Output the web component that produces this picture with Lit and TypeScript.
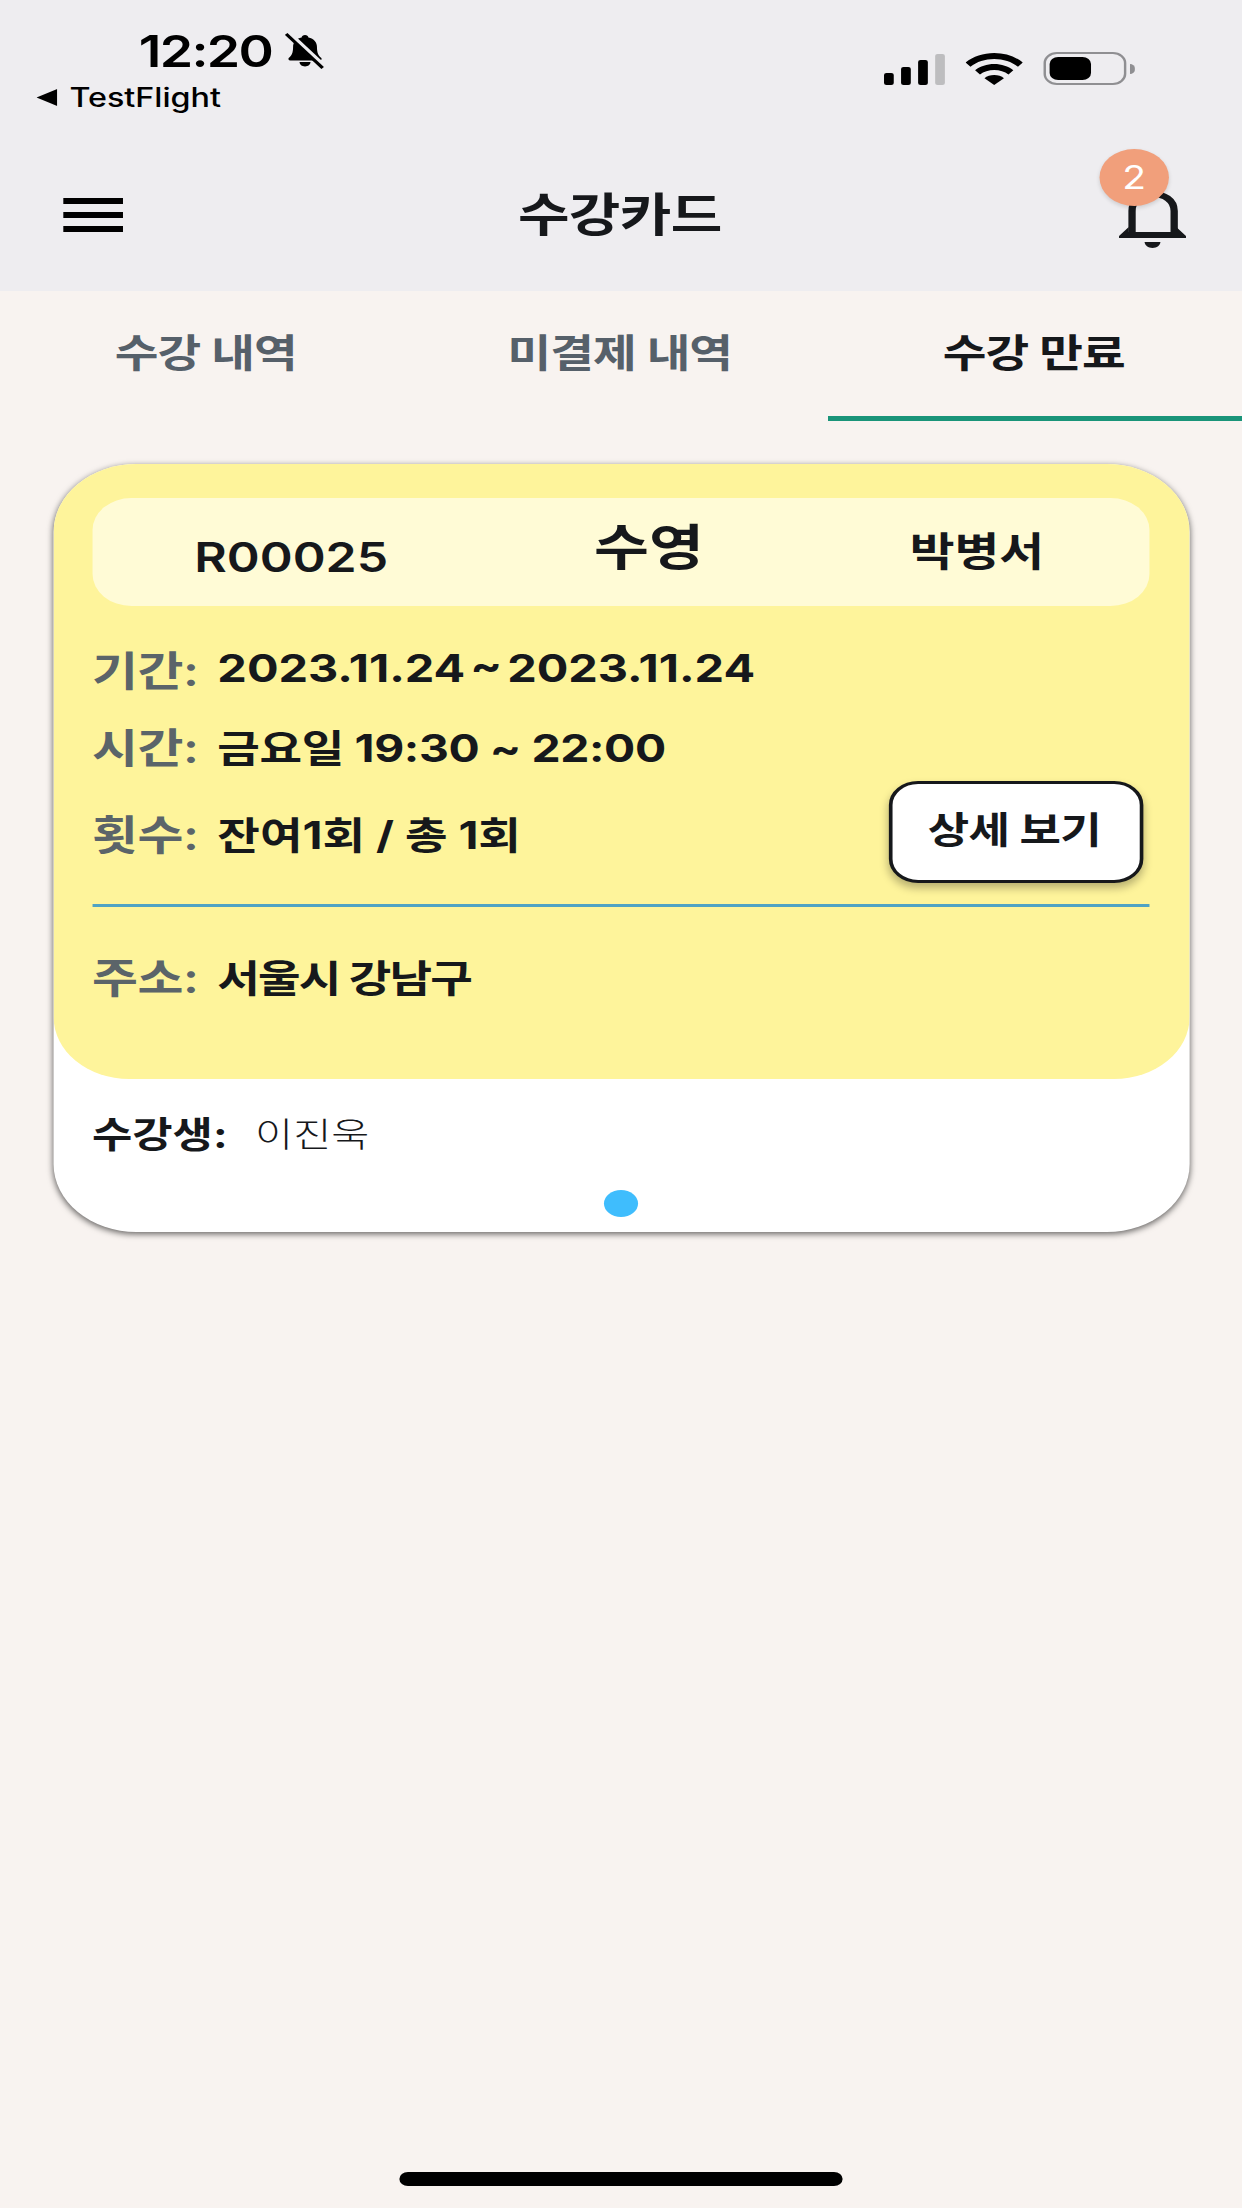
import { LitElement, css, html } from 'lit'
import { customElement } from 'lit/decorators.js'

@customElement('app-root')
export class AppRoot extends LitElement {
  render() {
    return html`
      <div class="screen">
        <header class="top">
          <div class="status">
            <div class="status-left">
              <div class="clock">
                <span>12:20</span>
                <svg class="muted" viewBox="0 0 33 36">
                  <path d="M16.5 2c1.6 0 2.6 1 2.8 2.4 4.6 1.1 7 4.8 7 9.4 0 6.2 1.2 9 3.4 11 .9.9.4 2.7-1.2 2.7H4.5c-1.6 0-2.1-1.8-1.2-2.700 2.200-2 3.400-4.800 3.400-11 0-4.600 2.400-8.300 7-9.400.2-1.400 1.200-2.400 2.800-2.400zM12 29h9c0 2.600-2 4.400-4.500 4.400S12 31.600 12 29z" fill="#000"/>
                  <path d="M2.500 0l29 33" stroke="#eeedf0" stroke-width="5"/>
                  <path d="M1 1l30 34" stroke="#000" stroke-width="2.800"/>
                </svg>
              </div>
              <div class="back">
                <svg viewBox="0 0 17 17"><path d="M0 8.500 17 0v17z" fill="#000"/></svg>
                <span>TestFlight</span>
              </div>
            </div>
            <div class="status-right">
              <div class="signal">
                <i style="height:12px"></i>
                <i style="height:18px"></i>
                <i style="height:25px"></i>
                <i class="off" style="height:31px"></i>
              </div>
              <svg class="wifi" viewBox="0 0 47 32">
                <path d="M23.500 0C32.500 0 40.700 3.500 47 9.400l-4 4.300C37.800 8.800 31 6 23.500 6S9.200 8.800 4 13.700L0 9.400C6.300 3.500 14.500 0 23.500 0z" fill="#000"/>
                <path d="M23.500 11c6 0 11.500 2.300 15.700 6.200l-4 4.300c-3.100-2.800-7.200-4.500-11.700-4.500s-8.600 1.700-11.700 4.500l-4-4.300C12 13.300 17.500 11 23.500 11z" fill="#000"/>
                <path d="M23.500 22c3.100 0 6 1.200 8 3.200L23.500 32l-8-6.800c2-2 4.900-3.200 8-3.200z" fill="#000"/>
              </svg>
              <div class="battery">
                <div class="cell"><div class="level"></div></div>
                <div class="nub"></div>
              </div>
            </div>
          </div>
          <nav class="nav">
            <div class="menu"><i></i><i></i><i></i></div>
            <h1>수강카드</h1>
            <div class="alarm">
              <svg viewBox="0 0 55 60">
                <path d="M10.700 44V22C10.700 11 18 5 27.500 5S45.300 11 45.300 22v22" fill="none" stroke="#16181b" stroke-width="6"/>
                <path d="M8 38 0 47v2h55v-2l-8-9v5H8z" fill="#16181b"/>
                <path d="M21 53h13c0 3-3 6-6.500 6S21 56 21 53z" fill="#16181b"/>
              </svg>
              <div class="badge">2</div>
            </div>
          </nav>
        </header>

        <div class="tabs">
          <div class="tab">수강 내역</div>
          <div class="tab">미결제 내역</div>
          <div class="tab active">수강 만료</div>
        </div>

        <main class="content">
          <section class="card">
            <div class="summary">
              <div class="title-bar">
                <span class="code">R00025</span>
                <span class="subject">수영</span>
                <span class="teacher">박병서</span>
              </div>
              <div class="row first">
                <span class="label">기간:</span>
                <span class="value date">2023.11.24 ~ 2023.11.24</span>
              </div>
              <div class="row second">
                <span class="label">시간:</span>
                <span class="value hours">금요일 19:30 ~ 22:00</span>
              </div>
              <div class="row with-action">
                <span class="label">횟수:</span>
                <span class="value">잔여1회 / 총 1회</span>
                <button class="detail">상세 보기</button>
              </div>
              <div class="divider"></div>
              <div class="row address">
                <span class="label">주소:</span>
                <span class="value place">서울시 강남구</span>
              </div>
            </div>
            <div class="student">
              <span class="student-label">수강생:</span>
              <span class="student-name">이진욱</span>
            </div>
            <div class="pager"><i></i></div>
          </section>
        </main>

        <div class="home-bar"></div>
      </div>
    `
  }

  static styles = css`
    :host {
      display: block;
      width: 1242px;
      height: 2208px;
      overflow: hidden;
      font-family: Inter, "Noto Sans CJK KR", sans-serif;
      color: #16181b;
    }

    /* everything is laid out on a narrower canvas and widened as one */
    .screen {
      width: 1020px;
      height: 2208px;
      display: flex;
      flex-direction: column;
      background: #f8f3f0;
      transform: scaleX(1.21765);
      transform-origin: 0 0;
    }

    .top {
      height: 291px;
      flex: none;
      background: #eeedf0;
      display: flex;
      flex-direction: column;
    }

    .status {
      height: 183px;
      flex: none;
      display: flex;
      justify-content: space-between;
      align-items: flex-start;
    }

    .status-left {
      padding: 25px 0 0 30px;
    }

    .clock {
      display: flex;
      align-items: center;
      gap: 10px;
      margin-left: 84px;
      height: 52px;
      font-size: 44px;
      line-height: 52px;
      font-weight: 600;
      color: #000;
      letter-spacing: -1.400px;
    }

    .muted {
      width: 33px;
      height: 36px;
      flex: none;
    }

    .back {
      display: flex;
      align-items: center;
      gap: 10px;
      height: 34px;
      margin-top: 3px;
      font-size: 26.500px;
      line-height: 34px;
      font-weight: 500;
      color: #000;
    }

    .back svg {
      width: 17px;
      height: 17px;
    }

    .status-right {
      display: flex;
      align-items: flex-end;
      padding: 52px 88px 0 0;
    }

    .signal {
      display: flex;
      align-items: flex-end;
      gap: 6px;
      height: 32px;
    }

    .signal i {
      width: 8px;
      background: #000;
      border-radius: 2px;
    }

    .signal i.off {
      background: #bdbdbf;
    }

    .wifi {
      width: 47px;
      height: 32px;
      margin-left: 17px;
    }

    .battery {
      display: flex;
      align-items: center;
      margin-left: 17px;
    }

    .cell {
      width: 68px;
      height: 33px;
      box-sizing: border-box;
      border: 2.500px solid #8f8f92;
      border-radius: 11px;
      padding: 2.500px 3px;
    }

    .level {
      width: 34px;
      height: 23px;
      background: #000;
      border-radius: 7px;
    }

    .nub {
      width: 4px;
      height: 10px;
      margin-left: 3px;
      background: #8f8f92;
      border-radius: 0 5px 5px 0;
    }

    .nav {
      flex: 1;
      position: relative;
      display: flex;
      align-items: flex-start;
      justify-content: center;
    }

    .menu {
      position: absolute;
      left: 52px;
      top: 15px;
      width: 49px;
      display: flex;
      flex-direction: column;
      gap: 8px;
    }

    .menu i {
      display: block;
      height: 6px;
      background: #000;
    }

    h1 {
      margin: 0;
      padding: 3px 2px 0 0;
      font-size: 46px;
      line-height: 56px;
      font-weight: 600;
      letter-spacing: -0.500px;
      color: #16181b;
    }

    .alarm {
      position: absolute;
      left: 919px;
      top: 6px;
      width: 55px;
      height: 60px;
    }

    .alarm svg {
      display: block;
      width: 55px;
      height: 60px;
    }

    .badge {
      position: absolute;
      left: -16px;
      top: -40px;
      width: 57px;
      height: 57px;
      border-radius: 50%;
      background: #f19f7b;
      color: #fff;
      font-size: 32px;
      line-height: 57px;
      text-align: center;
      box-shadow: 0 2px 4px rgba(0, 0, 0, 0.14);
    }

    .tabs {
      flex: none;
      display: grid;
      grid-template-columns: repeat(3, 1fr);
      height: 130px;
    }

    .tab {
      box-sizing: border-box;
      padding: 36px 2px 0 0;
      text-align: center;
      font-size: 39px;
      line-height: 52px;
      font-weight: 600;
      letter-spacing: -0.800px;
      color: #56606a;
    }

    .tab.active {
      color: #16181b;
      border-bottom: 5px solid #1a9479;
    }

    .content {
      flex: 1;
      padding: 43px 43.500px 0;
    }

    .card {
      width: 933px;
      height: 768px;
      border-radius: 68px;
      background: #fff;
      overflow: hidden;
      box-shadow: 0 2px 6px rgba(0, 0, 0, 0.6);
    }

    .summary {
      box-sizing: border-box;
      height: 615px;
      padding: 34px 33px 0 32px;
      background: #fef49b;
      border-radius: 0 0 62px 62px;
    }

    .title-bar {
      height: 108px;
      box-sizing: border-box;
      padding: 0 86px 0 84px;
      display: flex;
      justify-content: space-between;
      align-items: center;
      background: #fffbd6;
      border-radius: 32px;
    }

    .code {
      padding-top: 10px;
      font-size: 41px;
      line-height: 60px;
      font-weight: 600;
    }

    .subject {
      padding-bottom: 8px;
      font-size: 49px;
      line-height: 60px;
      font-weight: 600;
    }

    .teacher {
      font-size: 40px;
      line-height: 60px;
      font-weight: 600;
    }

    .row {
      display: flex;
      align-items: center;
      height: 60px;
      margin-top: 18px;
    }

    .row.first {
      margin-top: 32px;
    }

    .row.second {
      margin-top: 17px;
    }

    .row.with-action {
      height: 102px;
      margin-top: 6px;
    }

    .row.address {
      margin-top: 38px;
    }

    .label {
      width: 103px;
      flex: none;
      font-size: 41px;
      font-weight: 600;
      letter-spacing: -0.300px;
      color: #5b6469;
    }

    .value {
      font-size: 38px;
      font-weight: 700;
      color: #16181b;
    }

    .value.date {
      font-size: 38.500px;
      word-spacing: -5px;
    }

    .value.hours {
      letter-spacing: -0.300px;
    }

    .value.place {
      letter-spacing: -1.500px;
    }

    .detail {
      box-sizing: border-box;
      width: 209px;
      height: 102px;
      margin: 0 5px 0 auto;
      padding: 0 2px 8px 0;
      background: #fff;
      border: 3px solid #16181b;
      border-radius: 24px;
      font-family: inherit;
      font-size: 37px;
      font-weight: 600;
      letter-spacing: -0.700px;
      color: #16181b;
      box-shadow: 0 5px 8px rgba(0, 0, 0, 0.28);
    }

    .divider {
      height: 3px;
      margin-top: 21px;
      background: #4fa3c4;
    }

    .student {
      display: flex;
      align-items: center;
      height: 40px;
      margin: 33px 0 0 32px;
    }

    .student-label {
      width: 134px;
      flex: none;
      font-size: 36px;
      font-weight: 700;
    }

    .student-name {
      font-size: 34px;
      font-weight: 300;
    }

    .pager {
      display: flex;
      justify-content: center;
      margin-top: 38px;
    }

    .pager i {
      display: block;
      width: 28px;
      height: 27px;
      border-radius: 50%;
      background: #3fbdfd;
    }

    .home-bar {
      flex: none;
      align-self: center;
      width: 364px;
      height: 14px;
      margin-bottom: 22px;
      border-radius: 7px;
      background: #000;
    }
  `
}

declare global {
  interface HTMLElementTagNameMap {
    'app-root': AppRoot
  }
}
